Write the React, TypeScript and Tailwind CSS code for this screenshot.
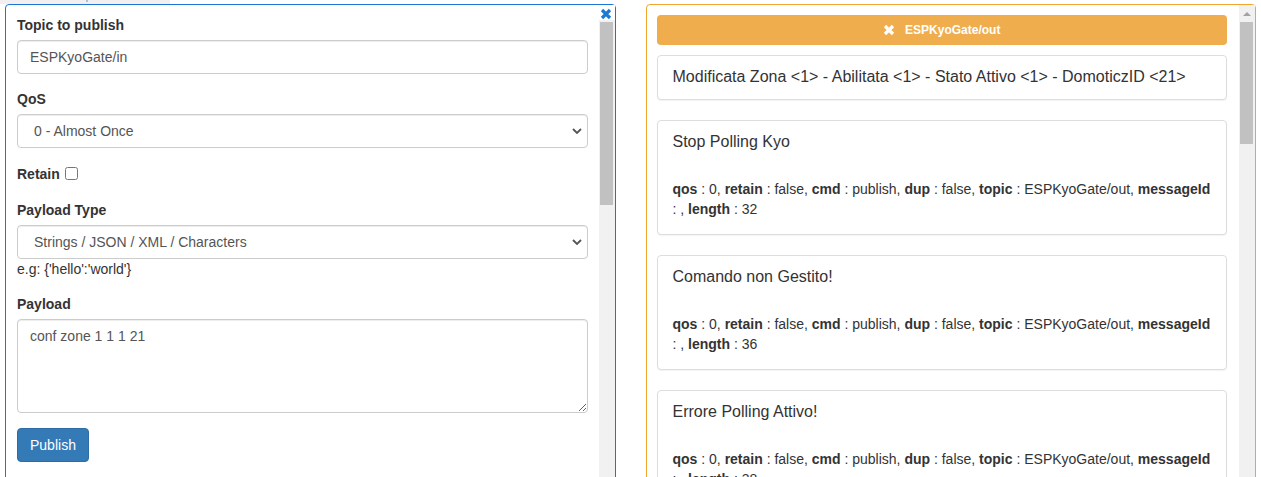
import React from 'react';

function CloseIcon({ className = '' }: { className?: string }) {
  return (
    <svg viewBox="0 0 12 12" className={className} fill="none">
      <path d="M2 2 L10 10 M10 2 L2 10" stroke="currentColor" strokeWidth="3.2" strokeLinecap="butt" />
    </svg>
  );
}

function Chevron() {
  return (
    <svg viewBox="0 0 10 6" className="w-[10px] h-[6px] text-[#555]" fill="none">
      <path d="M1 1 L5 5 L9 1" stroke="currentColor" strokeWidth="1.8" />
    </svg>
  );
}

function Label({ children, className = 'mb-[5px]' }: { children: React.ReactNode; className?: string }) {
  return <label className={`block text-[14px] leading-[20px] font-bold text-[#333] ${className}`}>{children}</label>;
}

function Select({ value }: { value: string }) {
  return (
    <div className="relative">
      <select
        defaultValue={value}
        className="appearance-none w-full h-[34px] border border-[#ccc] rounded-[4px] pl-[16px] pr-[30px] text-[14px] text-[#555] bg-white shadow-[inset_0_1px_1px_rgba(0,0,0,0.075)] outline-none"
      >
        <option>{value}</option>
      </select>
      <span className="absolute right-[6px] top-[14px] pointer-events-none">
        <Chevron />
      </span>
    </div>
  );
}

function Msg({ title, length }: { title: string; length: number }) {
  return (
    <div className="border border-[#ddd] rounded-[4px] bg-white shadow-[0_1px_1px_rgba(0,0,0,0.05)] px-[15px] pt-[10px] pb-[15px] mt-[20px]">
      <div className="text-[16px] leading-[22px] text-[#333]">{title}</div>
      <div className="mt-[26px] text-[14px] leading-[20px] text-[#333]">
        <b>qos</b> : 0, <b>retain</b> : false, <b>cmd</b> : publish, <b>dup</b> : false, <b>topic</b> : ESPKyoGate/out,{' '}
        <b>messageId</b> : , <b>length</b> : {length}
      </div>
    </div>
  );
}

export default function App() {
  return (
    <div className="h-[477px] overflow-hidden bg-white font-['Liberation_Sans',Arial,sans-serif]">
      <div className="h-[4px] flex">
        <div className="w-[170px] bg-[#f3eff0] relative">
          <div className="absolute left-[86px] top-0 w-[2px] h-[2px] bg-[#9fc3ea]" />
        </div>
      </div>
      <div className="flex gap-[30px] px-[5px]">
        {/* Publish panel */}
        <div className="w-[611px] h-[520px] border border-[#1976d2] rounded-t-[4px] flex">
          <div className="flex-1 px-[11px] pt-[10px]">
            <div className="mb-[15px]">
              <Label>Topic to publish</Label>
              <input
                defaultValue="ESPKyoGate/in"
                className="w-full h-[34px] border border-[#ccc] rounded-[4px] px-[12px] text-[14px] text-[#555] shadow-[inset_0_1px_1px_rgba(0,0,0,0.075)] outline-none"
              />
            </div>
            <div className="mb-[15px]">
              <Label>QoS</Label>
              <Select value="0 - Almost Once" />
            </div>
            <div className="mt-[1px] mb-[15px] flex items-center gap-[5px] h-[22px]">
              <span className="text-[14px] font-bold text-[#333]">Retain</span>
              <input type="checkbox" className="w-[13px] h-[13px] mt-[-2px]" />
            </div>
            <div>
              <Label>Payload Type</Label>
              <Select value="Strings / JSON / XML / Characters" />
              <div className="text-[14px] leading-[20px] text-[#333]">e.g: {"{'hello':'world'}"}</div>
            </div>
            <div className="mt-[15px] mb-[15px]">
              <Label className="mb-[5px]">Payload</Label>
              <textarea
                defaultValue="conf zone 1 1 1 21"
                className="block w-full h-[94px] border border-[#ccc] rounded-[4px] px-[12px] py-[6px] text-[14px] leading-[20px] text-[#555] shadow-[inset_0_1px_1px_rgba(0,0,0,0.075)] outline-none"
              />
            </div>
            <button className="h-[34px] px-[12px] bg-[#337ab7] border border-[#2e6da4] rounded-[4px] text-white text-[14px]">
              Publish
            </button>
          </div>
          <div className="w-[16px] bg-[#f1f1f1] flex flex-col">
            <div className="h-[15px] bg-white flex items-center justify-center">
              <CloseIcon className="w-[12px] h-[12px] text-[#1f78d1] ml-[-2px] mt-[2px]" />
            </div>
            <div className="mt-[2px] ml-[1px] w-[13px] h-[183px] bg-[#c1c1c1]" />
          </div>
        </div>

        {/* Messages panel */}
        <div className="w-[611px] h-[520px] border border-[#f0a52e] rounded-t-[4px] flex">
          <div className="flex-1 pl-[10px] pr-[12px] pt-[10px]">
            <div className="h-[30px] bg-[#f0ad4e] rounded-[4px] flex items-center justify-center gap-[10px] text-white text-[12px] font-bold">
              <CloseIcon className="w-[12px] h-[12px]" />
              <span>ESPKyoGate/out</span>
            </div>
            <div className="border border-[#ddd] rounded-[4px] bg-white shadow-[0_1px_1px_rgba(0,0,0,0.05)] px-[15px] pt-[10px] pb-[11px] mt-[10px]">
              <div className="text-[16px] leading-[22px] text-[#333]">
                Modificata Zona &lt;1&gt; - Abilitata &lt;1&gt; - Stato Attivo &lt;1&gt; - DomoticzID &lt;21&gt;
              </div>
            </div>
            <Msg title="Stop Polling Kyo" length={32} />
            <Msg title="Comando non Gestito!" length={36} />
            <Msg title="Errore Polling Attivo!" length={38} />
          </div>
          <div className="w-[16px] bg-[#f1f1f1] flex flex-col">
            <div className="h-[15px] flex items-center justify-center">
              <div className="w-0 h-0 border-l-[4px] border-r-[4px] border-b-[4px] border-l-transparent border-r-transparent border-b-[#a3a3a3] mt-[2px]" />
            </div>
            <div className="mt-[2px] ml-[1px] w-[13px] h-[122px] bg-[#c1c1c1]" />
          </div>
        </div>
      </div>
    </div>
  );
}
